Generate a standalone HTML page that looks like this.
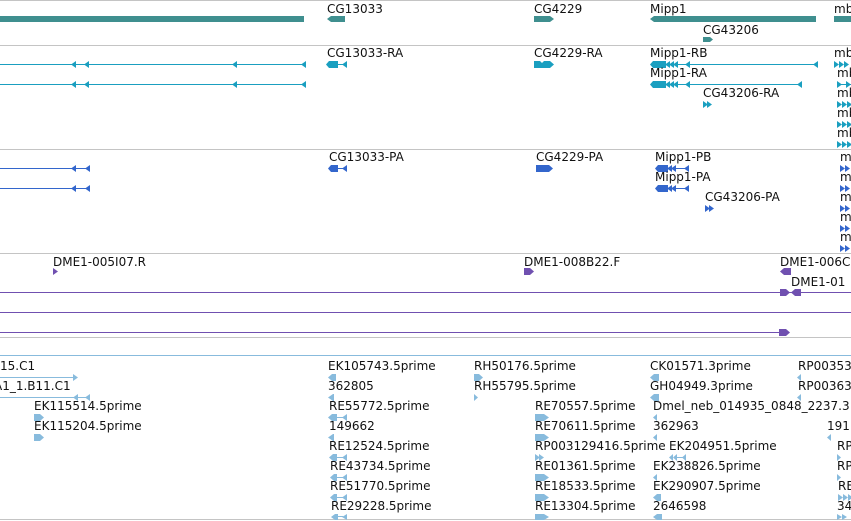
<!DOCTYPE html>
<html><head><meta charset="utf-8"><style>
html,body{margin:0;padding:0;background:#fff;}
svg{display:block}
text{font-family:"DejaVu Sans","Liberation Sans",sans-serif;font-size:12px;fill:#111;}
</style></head><body>
<svg width="851" height="521" viewBox="0 0 851 521" xmlns="http://www.w3.org/2000/svg" shape-rendering="crispEdges">
<g fill="#c4c4c4">
<rect x="0" y="0" width="851" height="1"/>
<rect x="0" y="45" width="851" height="1"/>
<rect x="0" y="149" width="851" height="1"/>
<rect x="0" y="253" width="851" height="1"/>
<rect x="0" y="337" width="851" height="1"/>
<rect x="0" y="519" width="851" height="1"/>
</g>
<rect x="0" y="355" width="851" height="1" fill="#88bbdd"/>

<g fill="#3f8f8f" shape-rendering="auto">
<rect x="0" y="16" width="304" height="6"/>
<polygon points="327,19 331,16 345,16 345,22 331,22"/>
<polygon points="534,16 550,16 554,19 550,22 534,22"/>
<polygon points="650,19 654,16 816,16 816,22 654,22"/>
<rect x="834" y="16" width="17" height="6"/>
<polygon points="703,37 710,37 713,39.5 710,42 703,42"/>
</g>
<text x="327" y="13">CG13033</text>
<text x="534" y="13">CG4229</text>
<text x="650" y="13">Mipp1</text>
<text x="834" y="13">mb</text>
<text x="703" y="34">CG43206</text>

<g fill="#1a9fc0">
<rect x="0" y="64" width="306" height="1"/>
<rect x="0" y="84" width="306" height="1"/>
</g>
<g fill="#1a9fc0" shape-rendering="auto">
<polygon points="71,64.5 76,61 76,68"/><polygon points="84,64.5 89,61 89,68"/><polygon points="232,64.5 237,61 237,68"/><polygon points="301,64.5 306,61 306,68"/>
<polygon points="71,84.5 76,81 76,88"/><polygon points="84,84.5 89,81 89,88"/><polygon points="232,84.5 237,81 237,88"/><polygon points="301,84.5 306,81 306,88"/>
<polygon points="326,64.5 329,61 338,61 338,68 329,68"/><rect x="338" y="64" width="5" height="1"/><polygon points="342,64.5 347,61 347,68"/>
<polygon points="534,61 540,61 542,63 544,61 550,61 554,64.5 550,68 534,68"/>
<polygon points="650,64.5 653,61 666,61 666,68 653,68"/><polygon points="665,64.5 670,61 670,68"/><polygon points="669,64.5 674,61 674,68"/><polygon points="673,64.5 678,61 678,68"/>
<rect x="676" y="64" width="142" height="1"/><polygon points="685,64.5 690,61 690,68"/><polygon points="813,64.5 818,61 818,68"/>
<polygon points="650,84.5 653,81 666,81 666,88 653,88"/><polygon points="665,84.5 670,81 670,88"/><polygon points="669,84.5 674,81 674,88"/><polygon points="673,84.5 678,81 678,88"/>
<rect x="676" y="84" width="126" height="1"/><polygon points="685,84.5 690,81 690,88"/><polygon points="797,84.5 802,81 802,88"/>
<polygon points="703,101 708,104.5 703,108"/><polygon points="707,101 712,104.5 707,108"/>
<polygon points="834,61 839,64.5 834,68"/><polygon points="839,61 844,64.5 839,68"/><polygon points="844,61 849,64.5 844,68"/>
<polygon points="837,81 842,84.5 837,88"/><rect x="837" y="84" width="14" height="1"/><polygon points="846,81 851,84.5 846,88"/>
<polygon points="837,101 842,104.5 837,108"/><polygon points="842,101 847,104.5 842,108"/><polygon points="847,101 852,104.5 847,108"/>
<polygon points="837,121 842,124.5 837,128"/><polygon points="842,121 847,124.5 842,128"/><polygon points="847,121 852,124.5 847,128"/>
<polygon points="837,141 842,144.5 837,148"/><polygon points="842,141 847,144.5 842,148"/><polygon points="847,141 852,144.5 847,148"/>
</g>
<text x="327" y="57">CG13033-RA</text>
<text x="534" y="57">CG4229-RA</text>
<text x="650" y="57">Mipp1-RB</text>
<text x="650" y="77">Mipp1-RA</text>
<text x="703" y="97">CG43206-RA</text>
<text x="834" y="57">mb</text><text x="837" y="77">mb</text><text x="837" y="97">mb</text><text x="837" y="117">mb</text><text x="837" y="137">mb</text>

<g fill="#3366cc">
<rect x="0" y="168" width="90" height="1"/>
<rect x="0" y="188" width="90" height="1"/>
</g>
<g fill="#3366cc" shape-rendering="auto">
<polygon points="71,168.5 76,165 76,172"/><polygon points="85,168.5 90,165 90,172"/>
<polygon points="71,188.5 76,185 76,192"/><polygon points="85,188.5 90,185 90,192"/>
<polygon points="328,168.5 331,165 338,165 338,172 331,172"/><rect x="338" y="168" width="6" height="1"/><polygon points="342,168.5 347,165 347,172"/>
<polygon points="536,165 549,165 553,168.5 549,172 536,172"/>
<polygon points="655,168.5 658,165 668,165 668,172 658,172"/><polygon points="667,168.5 672,165 672,172"/><polygon points="671,168.5 676,165 676,172"/><rect x="675" y="168" width="14" height="1"/><polygon points="684,168.5 689,165 689,172"/>
<polygon points="655,188.5 658,185 668,185 668,192 658,192"/><polygon points="667,188.5 672,185 672,192"/><polygon points="671,188.5 676,185 676,192"/><rect x="675" y="188" width="14" height="1"/><polygon points="684,188.5 689,185 689,192"/>
<polygon points="705,205 710,208.5 705,212"/><polygon points="709,205 714,208.5 709,212"/>
<polygon points="840,165 845,168.5 840,172"/><polygon points="845,165 850,168.5 845,172"/>
<polygon points="840,185 845,188.5 840,192"/><polygon points="845,185 850,188.5 845,192"/>
<polygon points="840,205 845,208.5 840,212"/><polygon points="845,205 850,208.5 845,212"/>
<polygon points="840,225 845,228.5 840,232"/><polygon points="845,225 850,228.5 845,232"/>
<polygon points="840,245 845,248.5 840,252"/><polygon points="845,245 850,248.5 845,252"/>
</g>
<text x="329" y="161">CG13033-PA</text>
<text x="536" y="161">CG4229-PA</text>
<text x="655" y="161">Mipp1-PB</text>
<text x="655" y="181">Mipp1-PA</text>
<text x="705" y="201">CG43206-PA</text>
<text x="840" y="161">m</text><text x="840" y="181">m</text><text x="840" y="201">m</text><text x="840" y="221">m</text><text x="840" y="241">m</text>

<g fill="#7050b0">
<rect x="0" y="292" width="851" height="1"/>
<rect x="0" y="312" width="851" height="1"/>
<rect x="0" y="332" width="786" height="1"/>
</g>
<g fill="#7050b0" shape-rendering="auto">
<polygon points="53,268 58,271.5 53,275"/>
<polygon points="524,268 530,268 534,271.5 530,275 524,275"/>
<polygon points="780,271.5 784,268 791,268 791,275 784,275"/>
<polygon points="780,289 786,289 790,292.5 786,296 780,296"/>
<polygon points="791,292.5 795,289 801,289 801,296 795,296"/>
<polygon points="779,329 786,329 790,332.5 786,336 779,336"/>
</g>
<text x="53" y="266">DME1-005I07.R</text>
<text x="524" y="266">DME1-008B22.F</text>
<text x="780" y="266">DME1-006C</text>
<text x="791" y="286">DME1-01</text>

<g fill="#88bbdd">
<rect x="0" y="377" width="74" height="1"/>
<rect x="0" y="397" width="90" height="1"/>
</g>
<g fill="#88bbdd" shape-rendering="auto">
<polygon points="73,374 78,377.5 73,381"/>
<polygon points="73,397.5 78,394 78,401"/><polygon points="85,397.5 90,394 90,401"/>
<polygon points="34,414 40,414 44,417.5 40,421 34,421"/>
<polygon points="34,434 40,434 44,437.5 40,441 34,441"/>
<polygon points="328,377.5 332,374 336,374 336,381 332,381"/>
<polygon points="328,397.5 333,394 334,394 334,401 333,401"/>
<polygon points="328,417.5 332,414 337,414 337,421 332,421"/><rect x="337" y="417" width="6" height="1"/><polygon points="342,417.5 347,414 347,421"/>
<polygon points="328,437.5 333,434 334,434 334,441 333,441"/>
<polygon points="329,457.5 333,454 337,454 337,461 333,461"/><rect x="337" y="457" width="6" height="1"/><polygon points="342,457.5 347,454 347,461"/>
<polygon points="330,477.5 334,474 337,474 337,481 334,481"/><rect x="337" y="477" width="6" height="1"/><polygon points="342,477.5 347,474 347,481"/>
<polygon points="330,497.5 334,494 337,494 337,501 334,501"/><rect x="337" y="497" width="6" height="1"/><polygon points="342,497.5 347,494 347,501"/>
<polygon points="331,517 335,514 338,514 338,520 335,520"/><rect x="338" y="516" width="5" height="1"/><polygon points="342,517 347,514 347,520"/>
<polygon points="474,374 479,374 483,377.5 479,381 474,381"/>
<polygon points="474,394 478,397.5 474,401"/>
<polygon points="535,414 544,414 549,417.5 544,421 535,421"/>
<polygon points="535,434 544,434 549,437.5 544,441 535,441"/>
<polygon points="535,454 540,457.5 535,461"/><polygon points="539,454 544,457.5 539,461"/>
<polygon points="535,474 544,474 549,477.5 544,481 535,481"/>
<polygon points="535,494 544,494 549,497.5 544,501 535,501"/>
<polygon points="535,514 544,514 549,517 544,520 535,520"/>
<polygon points="650,377.5 654,374 659,374 659,381 654,381"/>
<polygon points="650,397.5 654,394 659,394 659,401 654,401"/>
<polygon points="653,417.5 657,414 657,421"/>
<polygon points="653,437.5 657,434 657,441"/>
<polygon points="669,457.5 673,454 673,461"/><polygon points="673,457.5 677,454 677,461"/><rect x="677" y="457" width="6" height="1"/><polygon points="682,457.5 686,454 686,461"/>
<polygon points="653,477.5 657,474 657,481"/>
<polygon points="653,497.5 657,494 661,494 661,501 657,501"/>
<polygon points="653,517 657,514 662,514 662,520 657,520"/>
<polygon points="797,377.5 801,374 801,381"/>
<polygon points="797,397.5 801,394 801,401"/>
<polygon points="827,437.5 831,434 831,441"/>
<polygon points="837,454 841,457.5 837,461"/>
<polygon points="837,474 841,477.5 837,481"/>
<polygon points="838,494 843,497.5 838,501"/><polygon points="843,494 848,497.5 843,501"/><polygon points="848,494 853,497.5 848,501"/>
<polygon points="837,514 842,517 837,520"/><polygon points="842,514 847,517 842,520"/>
</g>
<text x="0" y="370">15.C1</text>
<text x="-6" y="390">A1_1.B11.C1</text>
<text x="34" y="410">EK115514.5prime</text>
<text x="34" y="430">EK115204.5prime</text>
<text x="328" y="370">EK105743.5prime</text>
<text x="328" y="390">362805</text>
<text x="329" y="410">RE55772.5prime</text>
<text x="329" y="430">149662</text>
<text x="329" y="450">RE12524.5prime</text>
<text x="330" y="470">RE43734.5prime</text>
<text x="330" y="490">RE51770.5prime</text>
<text x="331" y="510">RE29228.5prime</text>
<text x="474" y="370">RH50176.5prime</text>
<text x="474" y="390">RH55795.5prime</text>
<text x="535" y="410">RE70557.5prime</text>
<text x="535" y="430">RE70611.5prime</text>
<text x="535" y="450">RP003129416.5prime</text>
<text x="535" y="470">RE01361.5prime</text>
<text x="535" y="490">RE18533.5prime</text>
<text x="535" y="510">RE13304.5prime</text>
<text x="650" y="370">CK01571.3prime</text>
<text x="650" y="390">GH04949.3prime</text>
<text x="653" y="410">Dmel_neb_014935_0848_2237.3</text>
<text x="653" y="430">362963</text>
<text x="669" y="450">EK204951.5prime</text>
<text x="653" y="470">EK238826.5prime</text>
<text x="653" y="490">EK290907.5prime</text>
<text x="653" y="510">2646598</text>
<text x="798" y="370">RP00353</text>
<text x="798" y="390">RP00363</text>
<text x="827" y="430">191</text>
<text x="837" y="450">RP</text>
<text x="837" y="470">RP</text>
<text x="838" y="490">RE</text>
<text x="837" y="510">34</text>
</svg>
</body></html>
